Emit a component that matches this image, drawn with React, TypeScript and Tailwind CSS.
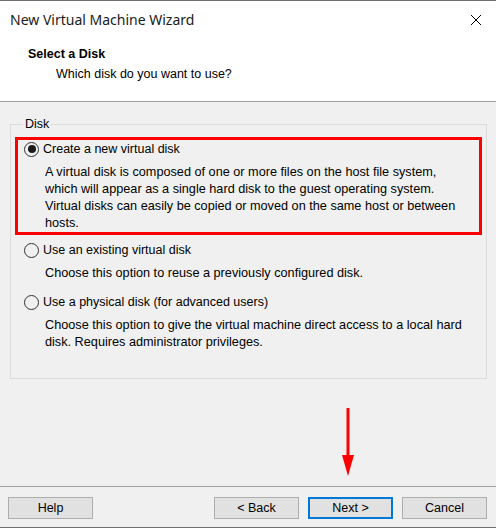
import React, { useState } from 'react';

type Choice = 'new' | 'existing' | 'physical';

const options: { id: Choice; label: string; lines: string[] }[] = [
  {
    id: 'new',
    label: 'Create a new virtual disk',
    lines: [
      'A virtual disk is composed of one or more files on the host file system,',
      'which will appear as a single hard disk to the guest operating system.',
      'Virtual disks can easily be copied or moved on the same host or between',
      'hosts.',
    ],
  },
  {
    id: 'existing',
    label: 'Use an existing virtual disk',
    lines: ['Choose this option to reuse a previously configured disk.'],
  },
  {
    id: 'physical',
    label: 'Use a physical disk (for advanced users)',
    lines: [
      'Choose this option to give the virtual machine direct access to a local hard',
      'disk. Requires administrator privileges.',
    ],
  },
];

const Radio: React.FC<{ checked: boolean }> = ({ checked }) => (
  <span className="w-[15px] h-[15px] rounded-full border border-[#333333] bg-transparent flex items-center justify-center shrink-0">
    {checked && <span className="w-[8px] h-[8px] rounded-full bg-[#1a1a1a]" />}
  </span>
);

const WinButton: React.FC<{ label: string; primary?: boolean }> = ({ label, primary }) => (
  <button
    className={`w-[85px] h-[22px] bg-[#e1e1e1] text-[12.5px] text-black flex items-center justify-center ${
      primary ? 'border-2 border-[#0078d7]' : 'border border-[#adadad]'
    }`}
  >
    {label}
  </button>
);

export default function App() {
  const [choice, setChoice] = useState<Choice>('new');

  return (
    <div className="w-[496px] h-[528px] flex flex-col bg-[#f0f0f0] border-t border-b border-[#6e6e6e] font-['Liberation_Sans',Arial,sans-serif] text-black relative overflow-hidden">
      {/* header */}
      <div className="h-[101px] bg-white border-b border-[#a0a0a0] shrink-0">
        <div className="h-[37px] flex items-center justify-between pl-[10px] pr-[14px]">
          <span className="text-[14px] font-['Noto_Sans',sans-serif] text-[#1a1a1a]">New Virtual Machine Wizard</span>
          <svg width="12" height="12" viewBox="0 0 12 12" className="text-black">
            <path d="M1 1 L11 11 M11 1 L1 11" stroke="currentColor" strokeWidth="1" />
          </svg>
        </div>
        <div className="mt-[8px] pl-[28px] text-[12.5px] leading-[17px] font-bold">Select a Disk</div>
        <div className="mt-[3px] pl-[56px] text-[12.5px] leading-[17px]">Which disk do you want to use?</div>
      </div>

      {/* body */}
      <div className="flex-1">
        <fieldset className="mt-[14px] ml-[10px] w-[477px] border border-[#dcdcdc] px-[4px] pb-[24px]">
          <legend className="ml-[8px] px-[2px] text-[12.5px] leading-[17px]">Disk</legend>
          {options.map((opt, i) => (
            <div
              key={opt.id}
              onClick={() => setChoice(opt.id)}
              className={`border-[3px] ${
                opt.id === 'new' ? 'border-[#ff0000]' : 'border-transparent'
              } ${i === 0 ? 'mt-[4px]' : i === 1 ? 'mt-[3px]' : 'mt-[5px]'}`}
            >
              <div className="h-[18px] flex items-center pl-[6px] gap-[4px] text-[12.5px]">
                <Radio checked={choice === opt.id} />
                <span>{opt.label}</span>
              </div>
              <div className="mt-[6px] pl-[27px] text-[12.7px] leading-[17px] whitespace-nowrap">
                {opt.lines.map((l) => (
                  <div key={l}>{l}</div>
                ))}
              </div>
            </div>
          ))}
        </fieldset>
      </div>

      {/* red annotation arrow */}
      <svg width="16" height="70" viewBox="0 0 16 70" className="absolute left-[340px] top-[407px]">
        <path d="M8 1 L8 52" stroke="#ff0000" strokeWidth="3" strokeLinecap="round" />
        <path d="M2 47 L14 47 L8 68 Z" fill="#ff0000" />
      </svg>

      {/* footer */}
      <div className="h-[41px] border-t border-[#a0a0a0] shrink-0 flex items-start justify-between pt-[10px] pl-[8px] pr-[9px]">
        <WinButton label="Help" />
        <div className="flex gap-[9px]">
          <WinButton label="< Back" />
          <WinButton label="Next >" primary />
          <WinButton label="Cancel" />
        </div>
      </div>
    </div>
  );
}
